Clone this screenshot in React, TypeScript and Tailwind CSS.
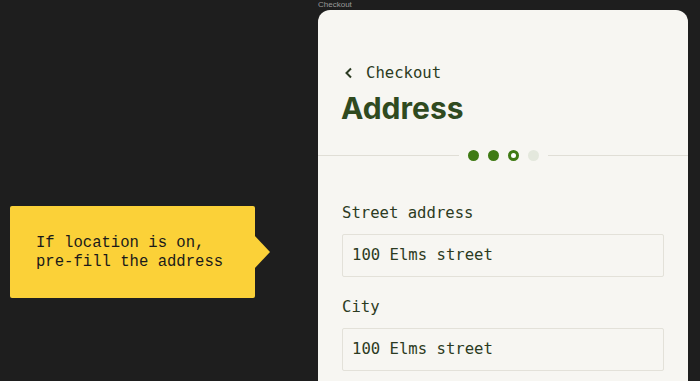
import React from "react";

const mono = { fontFamily: '"DejaVu Sans Mono", "Liberation Mono", monospace' };

function Field({ label, value }: { label: string; value: string }) {
  return (
    <div className="flex flex-col">
      <div className="text-[15.6px] leading-[20px] text-[#2c3b22]" style={mono}>
        {label}
      </div>
      <div
        className="mt-[11px] flex h-[43px] items-center rounded-[2px] border border-[#e3e1d9] bg-[#f7f6f2] pl-[9px] text-[15.6px] text-[#2c3b22]"
        style={mono}
      >
        {value}
      </div>
    </div>
  );
}

export default function App() {
  return (
    <div className="flex h-[381px] w-[700px] overflow-hidden bg-[#1e1e1e]">
      <div className="w-[318px] shrink-0 pl-[10px] pt-[206px]">
        <div className="flex items-center">
          <div
            className="flex h-[92px] w-[245px] flex-col justify-center rounded-[2px] bg-[#fbd138] pl-[26px] pt-[2px] text-[15.6px] leading-[19px] text-[#1a1a1a]"
            style={{ fontFamily: '"Liberation Mono", "Courier New", monospace' }}
          >
            <div>If location is on,</div>
            <div>pre-fill the address</div>
          </div>
          <svg width="16" height="34" viewBox="0 0 16 34" className="-ml-[1px]">
            <polygon points="0,0 16,17 0,34" fill="#fbd138" />
          </svg>
        </div>
      </div>
      <div className="flex w-[370px] shrink-0 flex-col">
        <div
          className="h-[10px] text-[8px] leading-[10px] text-[#9a9a9a]"
          style={{ fontFamily: '"Liberation Sans", Arial, sans-serif' }}
        >
          Checkout
        </div>
        <div className="flex-1 rounded-t-[12px] bg-[#f7f6f2] pt-[53px]">
          <div className="flex items-center pl-[24px] text-[#2c3b22]">
            <svg width="10" height="12" viewBox="0 0 10 12" className="ml-[2px]">
              <path d="M7 1.5 L2.5 6 L7 10.5" fill="none" stroke="#2c3b22" strokeWidth="2" />
            </svg>
            <span className="ml-[12px] text-[15.6px] leading-[20px]" style={mono}>
              Checkout
            </span>
          </div>
          <div
            className="mt-[7px] pl-[23px] text-[30px] font-bold leading-[36px] text-[#2f4a1f]"
            style={{ fontFamily: 'Inter, "Noto Sans", sans-serif' }}
          >
            Address
          </div>
          <div className="mt-[24px] flex items-center">
            <div className="h-px flex-1 bg-[#e0ded6]" />
            <div className="mx-[9px] flex items-center gap-[9px]">
              <div className="h-[11px] w-[11px] rounded-full bg-[#3f7a14]" />
              <div className="h-[11px] w-[11px] rounded-full bg-[#3f7a14]" />
              <div className="h-[11px] w-[11px] rounded-full border-[3px] border-[#3f7a14] bg-white" />
              <div className="h-[11px] w-[11px] rounded-full bg-[#e4e8dd]" />
            </div>
            <div className="h-px flex-1 bg-[#e0ded6]" />
          </div>
          <div className="mt-[42px] flex flex-col gap-[20px] pl-[24px] pr-[24px]">
            <Field label="Street address" value="100 Elms street" />
            <Field label="City" value="100 Elms street" />
          </div>
        </div>
      </div>
    </div>
  );
}
